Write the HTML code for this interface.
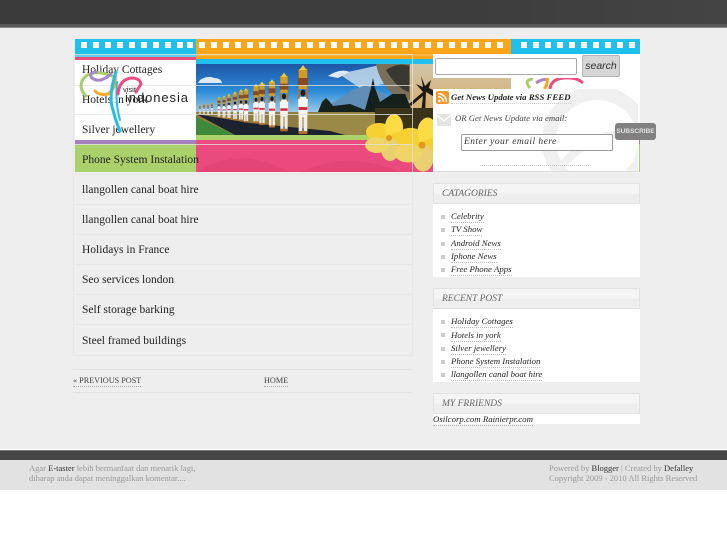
<!DOCTYPE html>
<html><head><meta charset="utf-8"><title>E-taster</title>
<style>
html,body{margin:0;padding:0;background:#fff}
#p{position:relative;width:727px;height:545px;overflow:hidden;background:#fff;font-family:"Liberation Serif",serif}
#p div{position:absolute}
.r{left:73px;width:338px;height:29px;border-bottom:1px solid rgba(228,228,228,.75);border-left:1px solid rgba(228,228,228,.75);border-right:1px solid rgba(228,228,228,.75);font-size:11.5px;color:#222;line-height:31px;text-indent:8px;white-space:nowrap}
.h{left:433px;width:205px;height:19px;border:1px solid #e2e2e2;background:linear-gradient(#f5f5f5 50%,#eeeeee 50%);font:italic 9.5px/21px "Liberation Serif",serif;color:#666;text-indent:8px}
.b{left:433px;width:207px;background:#fff}
.i{left:451px;font:italic 8.8px/11px "Liberation Serif",serif;color:#222;border-bottom:1px dotted #bbb;white-space:nowrap}
.s{left:441px;width:4px;height:4px;background:#ccc}
.l{font-size:8.2px;color:#444;border-bottom:1px dotted #aaa;line-height:11px;white-space:nowrap}
.f{font-size:8.5px;color:#999;line-height:10px;white-space:nowrap}
.f b{font-weight:normal;color:#333}
</style></head><body><div id="p">
<div style="left:0;top:0;width:727px;height:450px;background:#eeeeee"></div>
<div style="left:0;top:0;width:727px;height:24px;background:linear-gradient(90deg,#3b3b3b 0,#3c3c3c 60%,#444 100%)"></div>
<div style="left:0;top:24px;width:727px;height:3px;background:#5a5a5a"></div>
<div style="left:0;top:27px;width:727px;height:1px;background:#888"></div>

<svg style="position:absolute;left:75px;top:39px" width="565" height="133" viewBox="75 39 565 133">
<defs>
<linearGradient id="sky" x1="0" y1="0" x2="0" y2="1"><stop offset="0" stop-color="#1d56a6"/><stop offset=".55" stop-color="#2c8cd8"/><stop offset="1" stop-color="#a8d0e8"/></linearGradient>
<linearGradient id="sun" x1="0" y1="0" x2="0" y2="1"><stop offset="0" stop-color="#cfc5a8"/><stop offset=".6" stop-color="#d8b070"/><stop offset="1" stop-color="#a06d28"/></linearGradient>
<g id="m"><g transform="scale(.72,1)"><rect x="-6" y="0" width="12" height="20" fill="#d49a22"/><rect x="-7" y="9" width="14" height="7" fill="#8a4a20"/><path d="M-5 1 L0 -4 L5 1 Z" fill="#f4cc34"/><circle cx="0" cy="24" r="3.4" fill="#2a1a12"/><path d="M-7 28 H7 L6 48 H-6 Z" fill="#f8f6f2"/><rect x="-7" y="20" width="2.4" height="10" fill="#b5702a"/><rect x="4.6" y="20" width="2.4" height="10" fill="#b5702a"/><rect x="-6" y="38" width="12" height="3" fill="#d8303c"/><rect x="-6" y="48" width="5.2" height="15" fill="#f0eee8"/><rect x=".8" y="48" width="5.2" height="15" fill="#f0eee8"/><rect x="-6" y="62" width="12" height="3" fill="#b5702a"/></g></g>
<g id="fl"><ellipse cx="-10" cy="-5" rx="13" ry="9" fill="#f7d133"/><ellipse cx="5" cy="-10" rx="9" ry="13" fill="#fbdc45"/><ellipse cx="11" cy="4" rx="13" ry="9" fill="#f5cf30"/><ellipse cx="1" cy="12" rx="9" ry="12" fill="#e8d070"/><ellipse cx="-12" cy="8" rx="12" ry="8" fill="#eed566"/><circle cx="0" cy="1" r="3" fill="#e09a18"/></g>
</defs>
<rect x="75" y="39" width="121" height="15" fill="#1fc0ee"/>
<rect x="75" y="54" width="121" height="3" fill="#5ccdec"/>
<rect x="75" y="57" width="121" height="3" fill="#ea4c7c"/>
<rect x="75" y="60" width="121" height="80" fill="#fff"/>
<rect x="75" y="140" width="121" height="4" fill="#a67fbf"/>
<rect x="75" y="144" width="121" height="28" fill="#a9d26b"/>
<rect x="196" y="39" width="315" height="20" fill="#faa61a"/>
<rect x="196" y="54" width="315" height="2" fill="#fbb53e"/>
<rect x="196" y="59" width="315" height="5" fill="#1fc0ee"/>
<rect x="196" y="64" width="215" height="50" fill="url(#sky)"/>
<rect x="409" y="64" width="102" height="71" fill="url(#sun)"/>
<path d="M200 80 Q208 75 214 78 Q221 78 222 83 H198Z M328 76 Q340 68 350 72 L338 78Z" fill="#dfeaf2"/>
<path d="M339 74 L384 64 L384 84 L360 88 Z" fill="#cfe2ef" opacity=".8"/>
<path d="M330 105 L352 90 L366 85 L385 94 L392 112 H330 Z" fill="#5f8db8"/>
<path d="M376 64 H410 V100 L395 96 Q380 84 376 64Z" fill="#7a705a"/>
<path d="M386 70 Q398 62 409 66 V92 Q396 88 386 70Z" fill="#3a3830"/>
<path d="M318 112 L322 102 L326 98 L330 102 L333 106 L350 104 L365 110 L371 88 L373 78 L375 88 L380 102 L392 94 L405 94 L411 108 V113 H318Z" fill="#142019"/>
<path d="M409 104 L423 92 L416 84 L423 87 L421 76 L425 86 L431 80 L429 88 L433 90 V96 L426 92 L425 114 L421 114 L423 96 L411 106Z" fill="#1e1a14"/>
<rect x="196" y="112" width="215" height="23" fill="#8e7d3f"/>
<rect x="300" y="113" width="75" height="22" fill="#9a8a48"/>
<rect x="375" y="108" width="58" height="27" fill="#3a3318"/>
<path d="M196 114 L250 123 L330 131 L345 135 L235 135 Z" fill="#1c232e"/>
<path d="M196 117 L235 135 L196 135 Z" fill="#3f8a3a"/>
<use href="#m" transform="translate(200,105) scale(.15)"/><use href="#m" transform="translate(204,104) scale(.17)"/><use href="#m" transform="translate(208,104) scale(.17)"/><use href="#m" transform="translate(212,103) scale(.18)"/>
<use href="#m" transform="translate(219,98) scale(.3)"/><use href="#m" transform="translate(224,97) scale(.33)"/><use href="#m" transform="translate(229,95) scale(.37)"/><use href="#m" transform="translate(235,93) scale(.42)"/><use href="#m" transform="translate(241,91) scale(.46)"/><use href="#m" transform="translate(246,90) scale(.5)"/>
<use href="#m" transform="translate(256,86) scale(.57)"/><use href="#m" transform="translate(262,84) scale(.63)"/><use href="#m" transform="translate(272,82) scale(.7)"/><use href="#m" transform="translate(284,76) scale(.85)"/><use href="#m" transform="translate(303,69) scale(1)"/>
<rect x="196" y="135" width="315" height="5" fill="#a9d26b"/>
<rect x="196" y="140" width="315" height="32" fill="#ea4a7d"/>
<g fill="#dd4274" opacity=".6"><path d="M196 172 Q240 145 290 172Z M300 172 Q350 150 400 172Z"/></g>
<rect x="511" y="39" width="129" height="15" fill="#1fc0ee"/>
<rect x="511" y="54" width="129" height="118" fill="#fff"/>
<rect x="639" y="57" width="1" height="3" fill="#ea4c7c"/>
<rect x="639" y="140" width="1" height="4" fill="#a67fbf"/>
<rect x="639" y="144" width="1" height="28" fill="#a9d26b"/>
<use href="#fl" transform="translate(389,137)"/>
<use href="#fl" transform="translate(422,144) scale(1.15)"/>
<g fill="#fff"><rect x="81" y="42" width="6" height="6"/><rect x="93" y="42" width="6" height="6"/><rect x="105" y="42" width="6" height="6"/><rect x="117" y="42" width="6" height="6"/><rect x="129" y="42" width="6" height="6"/><rect x="141" y="42" width="6" height="6"/><rect x="153" y="42" width="6" height="6"/><rect x="165" y="42" width="6" height="6"/><rect x="177" y="42" width="6" height="6"/><rect x="187" y="42" width="6" height="6"/>
<rect x="199" y="42" width="6" height="6"/><rect x="211" y="42" width="6" height="6"/><rect x="223" y="42" width="6" height="6"/><rect x="235" y="42" width="6" height="6"/><rect x="247" y="42" width="6" height="6"/><rect x="259" y="42" width="6" height="6"/><rect x="271" y="42" width="6" height="6"/><rect x="283" y="42" width="6" height="6"/><rect x="295" y="42" width="6" height="6"/><rect x="307" y="42" width="6" height="6"/><rect x="319" y="42" width="6" height="6"/><rect x="331" y="42" width="6" height="6"/><rect x="343" y="42" width="6" height="6"/><rect x="355" y="42" width="6" height="6"/><rect x="367" y="42" width="6" height="6"/><rect x="379" y="42" width="6" height="6"/><rect x="391" y="42" width="6" height="6"/><rect x="402" y="42" width="6" height="6"/><rect x="413" y="42" width="6" height="6"/><rect x="425" y="42" width="6" height="6"/><rect x="437" y="42" width="6" height="6"/><rect x="449" y="42" width="6" height="6"/><rect x="461" y="42" width="6" height="6"/><rect x="473" y="42" width="6" height="6"/><rect x="485" y="42" width="6" height="6"/><rect x="497" y="42" width="6" height="6"/>
<rect x="521" y="42" width="6" height="6"/><rect x="533" y="42" width="6" height="6"/><rect x="545" y="42" width="6" height="6"/><rect x="557" y="42" width="6" height="6"/><rect x="569" y="42" width="6" height="6"/><rect x="581" y="42" width="6" height="6"/><rect x="593" y="42" width="6" height="6"/><rect x="605" y="42" width="6" height="6"/><rect x="617" y="42" width="6" height="6"/><rect x="629" y="42" width="6" height="6"/></g>
</svg>

<div style="left:73px;top:54px;width:338px;height:30px;border:1px solid rgba(228,228,228,.75);font-size:11.5px;color:#222;line-height:30px;text-indent:8px;white-space:nowrap">Holiday Cottages</div>
<div class="r" style="top:85px">Hotels in york</div>
<div class="r" style="top:115px">Silver jewellery</div>
<div class="r" style="top:145px">Phone System Instalation</div>
<div class="r" style="top:175px">llangollen canal boat hire</div>
<div class="r" style="top:205px">llangollen canal boat hire</div>
<div class="r" style="top:235px">Holidays in France</div>
<div class="r" style="top:265px">Seo services london</div>
<div class="r" style="top:295px">Self storage barking</div>
<div class="r" style="top:326px">Steel framed buildings</div>

<svg style="position:absolute;left:75px;top:60px" width="125" height="80" viewBox="75 60 125 80">
<g fill="none" stroke-linecap="round">
<path d="M112 76 Q92 68 83 79 Q78 88 86 96" stroke="#a6cf6a" stroke-width="3"/>
<path d="M111 74 Q100 84 92 78 Q88 73 96 72" stroke="#a888c8" stroke-width="3"/>
<path d="M115 72 Q117 88 108 94 Q100 96 95 91" stroke="#f7a823" stroke-width="3"/>
<path d="M116 72 Q108 96 113 110 Q116 122 120 131" stroke="#1fbcec" stroke-width="3"/>
<path d="M117 82 Q115 102 120 120" stroke="#1fbcec" stroke-width="2"/>
<path d="M118 94 Q119 80 131 78 Q140 78 141 84 L136 92" stroke="#ec4c80" stroke-width="3"/>
</g>
<text x="123" y="92" font-family="Liberation Sans,sans-serif" font-size="7.5" fill="#222">visit</text>
<text x="125" y="102" font-family="Liberation Sans,sans-serif" font-size="13" textLength="63" lengthAdjust="spacing" fill="#222">indonesia</text>
</svg>

<div style="left:433px;top:54px;width:207px;height:24px;background:#fff"></div>
<div style="left:511px;top:78px;width:128px;height:11px;background:#fff;overflow:hidden"><svg width="128" height="11" style="display:block"><g fill="none" stroke-width="3"><path d="M19 10 Q12 2 22 1" stroke="#a6cf6a"/><path d="M25 5 Q32 0 38 2" stroke="#a888c8"/><path d="M36 0 Q37 7 33 11" stroke="#f7a823"/><path d="M39 11 Q40 1 53 0 Q66 -1 72 5" stroke="#ec4c80"/></g></svg></div>
<div style="left:433px;top:89px;width:205px;height:82px;background:#fff;border-bottom:1px solid #ddd;overflow:hidden"><svg width="205" height="82" style="display:block"><g fill="none" stroke="#f0f0f0"><circle cx="164" cy="52" r="48" stroke-width="14"/><path d="M125 82 Q150 45 205 42" stroke-width="8"/></g></svg></div>
<div style="left:435px;top:58px;width:140px;height:15px;border:1px solid #a8a8a8;border-radius:2px;background:#fff"></div>
<div style="left:582px;top:55px;width:36px;height:20px;border:1px solid #b5b5b5;border-radius:2px;background:#d6d6d6;font:italic 10.5px/20px 'Liberation Sans',sans-serif;color:#333;text-align:center">search</div>

<svg style="position:absolute;left:436px;top:91px" width="13" height="13" viewBox="0 0 13 13"><rect width="13" height="13" rx="2" fill="#f39a2e"/><circle cx="3.4" cy="9.8" r="1.3" fill="#fff"/><path d="M2.2 5.6a5.3 5.3 0 0 1 5.3 5.3M2.2 2.6a8.3 8.3 0 0 1 8.3 8.3" fill="none" stroke="#fff" stroke-width="1.5"/></svg>
<div style="left:451px;top:91px;font:italic bold 8.8px/12px 'Liberation Serif',serif;color:#222;white-space:nowrap;border-bottom:1px dotted #ccc">Get News Update via RSS FEED</div>
<svg style="position:absolute;left:437px;top:114px" width="14" height="12" viewBox="0 0 14 12"><rect width="14" height="12" fill="#e4e4e4"/><path d="M0 1 L7 7 L14 1" fill="none" stroke="#fff" stroke-width="1.2"/></svg>
<div style="left:455px;top:112px;font:italic 8.7px/12px 'Liberation Serif',serif;color:#444;white-space:nowrap">OR Get News Update via email:</div>
<div style="left:461px;top:134px;width:150px;height:15px;border:1px solid #999;border-radius:2px;background:#fff;font:italic 9.5px/15px 'Liberation Serif',serif;letter-spacing:.45px;color:#333;text-indent:2px;white-space:nowrap">Enter your email here</div>
<div style="left:615px;top:123px;width:41px;height:17px;background:#808080;border-radius:3px;font:bold 6.5px/17px 'Liberation Sans',sans-serif;color:#e0e0e0;text-align:center">SUBSCRIBE</div>
<div style="left:480px;top:165px;width:109px;height:0;border-top:1px dotted #c8c8c8"></div>

<div style="left:73px;top:369px;width:338px;height:1px;background:#e3e3e3"></div>
<div style="left:73px;top:392px;width:338px;height:1px;background:#e3e3e3"></div>
<div class="l" style="left:73px;top:375px">« PREVIOUS POST</div>
<div class="l" style="left:264px;top:375px">HOME</div>

<div class="h" style="top:183px">CATAGORIES</div>
<div class="b" style="top:204px;height:73px"></div>
<div class="s" style="top:215px"></div><div class="i" style="top:211px">Celebrity</div>
<div class="s" style="top:228px"></div><div class="i" style="top:224px">TV Show</div>
<div class="s" style="top:242px"></div><div class="i" style="top:238px">Android News</div>
<div class="s" style="top:255px"></div><div class="i" style="top:251px">Iphone News</div>
<div class="s" style="top:268px"></div><div class="i" style="top:264px">Free Phone Apps</div>

<div class="h" style="top:288px">RECENT POST</div>
<div class="b" style="top:309px;height:73px"></div>
<div class="s" style="top:320px"></div><div class="i" style="top:316px">Holiday Cottages</div>
<div class="s" style="top:333px"></div><div class="i" style="top:330px">Hotels in york</div>
<div class="s" style="top:347px"></div><div class="i" style="top:343px">Silver jewellery</div>
<div class="s" style="top:360px"></div><div class="i" style="top:356px">Phone System Instalation</div>
<div class="s" style="top:373px"></div><div class="i" style="top:369px">llangollen canal boat hire</div>

<div class="h" style="top:393px">MY FRRIENDS</div>
<div class="b" style="top:414px;height:10px"></div>
<div class="i" style="left:433px;top:414px">Osilcorp.com Rainierpr.com</div>

<div style="left:0;top:449px;width:727px;height:1px;background:#fff"></div>
<div style="left:0;top:450px;width:727px;height:10px;background:#464646;border-top:1px solid #777;box-sizing:border-box"></div>
<div style="left:0;top:460px;width:727px;height:30px;background:#e2e2e2"></div>
<div class="f" style="left:29px;top:463px">Agar <b>E-taster</b> lebih bermanfaat dan menarik lagi,</div>
<div class="f" style="left:29px;top:473px">diharap anda dapat meninggalkan komentar....</div>
<div class="f" style="left:549px;top:463px">Powered by <b>Blogger</b> | Created by <b>Defalley</b></div>
<div class="f" style="left:549px;top:473px">Copyright 2009 - 2010 All Rights Reserved</div>
</div></body></html>
